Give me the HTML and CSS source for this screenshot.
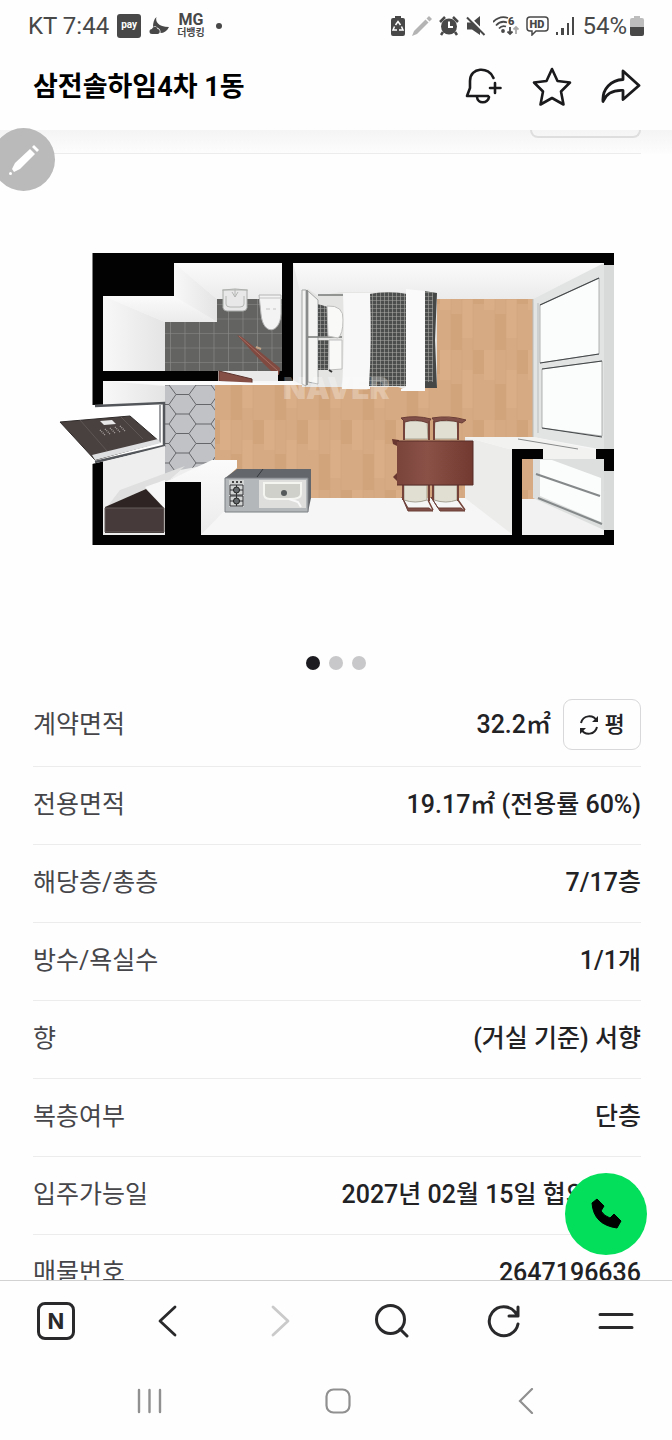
FILE: index.html
```html
<!DOCTYPE html>
<html lang="ko">
<head>
    <meta charset="UTF-8">
    <meta name="viewport" content="width=device-width, initial-scale=1.0">
    <title>삼전솔하임4차 1동</title>
    <link rel="stylesheet" href="styles.css">
</head>
<body>
    <!-- 상태 표시줄 -->
    <div class="status-bar">
        <div class="status-left">
            <span class="status-text">KT 7:44</span>
            <span class="pay">pay</span>
            <svg width="20" height="20" viewBox="0 0 20 20" fill="#484848"><path d="M7.500 1C6 5 9 11 20 11C18 15 15 17 11.500 17C12 14 10 12 8 11.500C7 10 5 10 4 11C4 7 5 3 7.500 1Z"/><path d="M3 18a2.500 2.500 0 0 1 0-5c1-3 5-3 5.500 0c3 0 3 5 0 5z"/></svg>
            <span class="mg"><b>MG</b><small>더뱅킹</small></span>
            <span class="more-dot"></span>
        </div>
        <div class="status-right">
            <svg width="14" height="20" viewBox="0 0 14 20"><path d="M4 2V0h6v2h2q2 0 2 2v14q0 2-2 2H2q-2 0-2-2V4q0-2 2-2z" fill="#484848"/><path d="M4.500 9L7 5.500L9.500 9M10.500 10.500L12 14H8M6 14H2L3.500 10.500" fill="none" stroke="#fff" stroke-width="1.500"/></svg>
            <svg width="20" height="20" viewBox="0 0 20 20" fill="#b4b4b4"><path d="M0 20L2 15L13.500 3.500L16.500 6.500L5 18Z"/><path d="M14.500 2.500L17 0L20 3L17.500 5.500Z"/></svg>
            <svg width="20" height="20" viewBox="0 0 20 20"><path d="M1 6L6 1M14 1L19 6M4 16L2 19M16 16L18 19" stroke="#484848" stroke-width="2.500"/><circle cx="10" cy="10.500" r="8" fill="#484848"/><path d="M10 5.500V11H14" fill="none" stroke="#fff" stroke-width="2"/></svg>
            <svg width="20" height="20" viewBox="0 0 20 20"><path d="M1 6.500H6L14 0V19L6 13.500H1Z" fill="#484848"/><path d="M2 0L20 18" stroke="#fff" stroke-width="2"/><path d="M1 1.500L18.500 19" stroke="#484848" stroke-width="2"/></svg>
            <svg width="26" height="20" viewBox="0 0 26 20" fill="none" stroke="#484848" stroke-width="1.800"><path d="M0 6Q7-1 15 2M3 9.500Q8 4 14 6.500M6 12.500Q9 9 13 10.500"/><circle cx="10" cy="15" r="1"/><path d="M17 11V18M14.500 15.500L17 18L19.500 15.500"/><path d="M23 18V11M20.500 13.500L23 11L25.500 13.500" stroke="#aaa"/><text class="icon-text" x="15" y="9">6</text></svg>
            <svg width="23" height="20" viewBox="0 0 23 20" fill="none" stroke="#484848"><path d="M4 1H19Q22 1 22 4V12Q22 15 19 15H10L6 19V15H4Q1 15 1 12V4Q1 1 4 1Z" stroke-width="1.500"/><text class="icon-text" x="3.500" y="12">HD</text></svg>
            <svg width="19" height="20" viewBox="0 0 19 20" fill="#484848"><path d="M0 16h2v3H0zM5 12h3v7H5zM11 7h2v12h-2zM16 1h2v18h-2z"/></svg>
            <span class="status-text">54%</span>
            <svg width="14" height="20" viewBox="0 0 14 20"><path d="M4 2V0h6v2h2q2 0 2 2v7H0V4q0-2 2-2z" fill="#bdbdbd"/><path d="M0 11H14V18q0 2-2 2H2q-2 0-2-2z" fill="#484848"/></svg>
        </div>
    </div>

    <header class="header">
        <h1>삼전솔하임4차 1동</h1>
        <div class="header-actions">
            <button type="button" class="icon-btn" aria-label="알림 추가">
                <svg width="40" height="40" viewBox="0 0 40 40" fill="none" stroke="#1a1a1c" stroke-width="2.600" stroke-linecap="round" stroke-linejoin="round"><path d="M30.500 11C26-1 7 0 7 14V21L4 29H25"/><path d="M14 30C14.500 37 25 37 26 30M27 21H37.500M32 16V26"/></svg>
            </button>
            <button type="button" class="icon-btn" aria-label="관심 매물">
                <svg width="40" height="40" viewBox="0 0 40 40" fill="none" stroke="#1a1a1c" stroke-width="2.600" stroke-linejoin="round"><path d="M20 2L25.500 14L38 15.500L29 24.500L31.500 37.500L20 31L8.500 37.500L11 24.500L2 15.500L14.500 14Z"/></svg>
            </button>
            <button type="button" class="icon-btn" aria-label="공유">
                <svg width="40" height="40" viewBox="0 0 40 40" fill="none" stroke="#1a1a1c" stroke-width="2.800" stroke-linejoin="round"><path d="M22 4L38 18.500L22 32.500V23.500C12 23 5 27 2 34.500C1 22 10 13 22 12.500Z"/></svg>
            </button>
        </div>
    </header>

    <main class="content">
        <div class="prev-row"><div class="prev-button"></div></div>

        <!-- 평면도 -->
        <section class="gallery">
            <svg class="floor-plan" viewBox="0 250 672 300" role="img" aria-label="평면도">
                <defs>
                    <pattern id="tile" width="14.500" height="14.500" patternUnits="userSpaceOnUse" x="170" y="304"><rect width="15" height="15" fill="#636462"/><path d="M0 0H14.500M0 0V14.500" stroke="#8d8e8c" stroke-width="1.200"/></pattern>
                    <pattern id="wood" width="44" height="70" patternUnits="userSpaceOnUse"><rect width="44" height="70" fill="#d6aa82"/><path d="M0 0H11V30H0ZM22 20H33V58H22Z" fill="#daaf88"/><path d="M11 34H22V70H11ZM33 0H44V24H33Z" fill="#d2a47b"/><path d="M11 0V70M22 0V70M33 0V70" stroke="#cfa27a" stroke-width=".5"/></pattern>
                    <pattern id="hex" width="42" height="39" patternUnits="userSpaceOnUse" x="169" y="385"><rect width="42" height="39" fill="#c1c2c5"/><path d="M0 0L7 9.500L0 19.500H-8M7 9.500H20L27 0H42M20 9.500L27 19.500H42M0 19.500L7 29L0 39M7 29H20L27 19.500M20 29L27 39H42" fill="none" stroke="#64666a" stroke-width="1"/></pattern>
                    <pattern id="check" width="4" height="4" patternUnits="userSpaceOnUse"><rect width="4" height="4" fill="#4c4e4d"/><path d="M0 0H4M0 0V4" stroke="#a9aaa6" stroke-width="1.200"/></pattern>
                    <linearGradient id="wallDown" x1="0" y1="0" x2="0" y2="1"><stop offset="0" stop-color="#fafbfa"/><stop offset="1" stop-color="#eaebea"/></linearGradient>
                    <linearGradient id="wallRight"><stop offset="0" stop-color="#f8f8f8"/><stop offset="1" stop-color="#e3e4e3"/></linearGradient>
                    <linearGradient id="table"><stop offset="0" stop-color="#7a443b"/><stop offset=".4" stop-color="#8a5147"/><stop offset="1" stop-color="#71392f"/></linearGradient>
                </defs>

                <!-- 외벽 -->
                <rect x="92.500" y="253" width="521.500" height="292" fill="#020202"/>
                <path d="M293 263H604V535H103V381H293Z" fill="#f7f7f7"/>

                <!-- 욕실 -->
                <path d="M103 296H174V263H282V371H103Z" fill="#f5f6f5"/>
                <path d="M103 296L165 322V371H103Z" fill="url(#wallRight)"/>
                <path d="M103 296H174L217 322H165Z" fill="url(#wallDown)"/>
                <path d="M174 263L217 299V322L174 296Z" fill="url(#wallRight)"/>
                <path d="M174 263H282V299H217Z" fill="url(#wallDown)"/>
                <path d="M165 322H217V299H282V371H165Z" fill="url(#tile)"/>
                <path d="M223 290Q235 288 247 290V308Q246 311 243 311H227Q224 311 223 308Z" fill="#e7e8e7" stroke="#a8aaa8"/>
                <path d="M226 296V304Q226 307 230 307H240Q244 307 244 304V296M222 290H248M235 289V297M232 292L235 297L238 292" fill="none" stroke="#b4b6b4"/>
                <path d="M259 295H281V314C280 334 263 336 261 314Z" fill="#f2f3f2" stroke="#b4b5b4"/>
                <path d="M260 298H281M266 309H270M273 309H276" stroke="#c2c3c2"/>
                <path d="M237 335L242 337L280 368L279 375L274 374L260 360Z" fill="#804a41"/>
                <path d="M239 336L278 371" stroke="#a56c61"/>
                <path d="M256 347L261 349" stroke="#c1a388" stroke-width="2"/>
                <rect x="218" y="371" width="60" height="10" fill="#e9e9e9"/>
                <path d="M219 371L252 379V386L219 381Z" fill="#864f46" stroke="#5b332d"/>

                <!-- 거실 -->
                <path d="M293 263H604L533 299H302Z" fill="url(#wallDown)"/>
                <path d="M293 263L302 299V385L293 380Z" fill="#e9eae9"/>
                <path d="M302 299H533V437H465V498H215V385H302Z" fill="url(#wood)"/>
                <path d="M103 381L219 381L300 385H165Z" fill="#fbfbfb"/>
                <path d="M103 381L165 386V404L103 405Z" fill="url(#wallRight)"/>
                <rect x="165" y="385" width="50" height="98" fill="url(#hex)"/>

                <!-- 침대 -->
                <path d="M302 290L308 289L318 296L341 292L437 293V387L410 388V391L398 387H302Z" fill="#e4e4e3"/>
                <path d="M302 290L306 290V386L302 384ZM308 291L318 300V384L308 382Z" fill="#f4f4f3" stroke="#a5a7a6"/>
                <path d="M307 290V385M308 337H342M318 295H343" stroke="#777978" stroke-width="1.500"/>
                <path d="M318 304L328 307L329 336L318 337ZM318 340H329L328 370L318 370Z" fill="url(#check)"/>
                <path d="M327 306Q344 305 343 320Q343 334 338 338L328 336ZM329 340H342V369L329 370Z" fill="#f9f9f8" stroke="#bebfbd"/>
                <path d="M329 370L332 372" stroke="#333" stroke-width="2"/>
                <path d="M343 293H370V389H342Q345 340 343 293Z" fill="#f8f8f8"/>
                <path d="M370 294Q388 290 407 294V386H369Q372 340 370 294Z" fill="url(#check)"/>
                <path d="M424 291L437 293L435 340L437 388H424Z" fill="#454746"/>
                <path d="M424 292H433V382H424Z" fill="url(#check)"/>
                <path d="M406 289L425 291V391H401V389L406 387Z" fill="#fafafa"/>
                <text class="watermark" x="283" y="399">NAVER</text>

                <!-- 창문 -->
                <path d="M533 299L604 263V450L533 437Z" fill="#e2e4e4"/>
                <path d="M540 305L599 278V354L540 363Z" fill="#fbfcfc" stroke="#949697" stroke-width=".7"/>
                <path d="M542 369L602 361V436L542 428Z" fill="#fbfcfc" stroke="#949697" stroke-width=".7"/>
                <path d="M540 305L599 278M540 363L599 354M542 369L602 361M542 428L602 437" stroke="#444748" stroke-width="1.200"/>
                <path d="M533 299V437M538 303V433" stroke="#b9bcbc"/>
                <rect x="604" y="265" width="10" height="265" fill="#d8dad9"/>

                <!-- 현관 -->
                <path d="M92 405L165 403V447L92 464Z" fill="#fff"/>
                <path d="M95 406L164 403V446L95 462" fill="none" stroke="#53565a" stroke-width="2.500"/>
                <path d="M160 405V443" stroke="#9b9da0" stroke-width="2"/>
                <path d="M60 422L130 416L160 442L95 460Z" fill="#494140" stroke="#302b2b"/>
                <path d="M92 455L158 439L161 443L95 460Z" fill="#dedfe0"/>
                <path d="M80 420L107 451M121 417L143 439" stroke="#5e5655"/>
                <path d="M100 421L112 420L116 424L104 425Z" fill="#e8e8e8"/>
                <path d="M100 430L105 435M105 429L110 434M110 428L115 433M115 427L120 432M120 426L125 431" stroke="#aaa4a1" stroke-width="1.300" stroke-dasharray="1 1"/>
                <path d="M103 462L165 446V482L180 470L202 466L165 482V535H103Z" fill="#edeeed"/>
                <path d="M107 507L120 490L185 466L165 484L145 489Z" fill="#dedfde"/>
                <path d="M105 507L146 489L164 508V533H105Z" fill="#2d2423"/>
                <path d="M105 508H164V532H105Z" fill="#463b3a" stroke="#655c5b"/>
                <path d="M145 487L165 480V508Z" fill="#f7f7f7"/>

                <!-- 주방 -->
                <path d="M165 482L212 460H237V468L225 479V512L201 535V482Z" fill="url(#wallDown)"/>
                <rect x="165" y="482" width="36" height="54" fill="#020202"/>
                <path d="M201 535L225 510L310 498H465L513 535Z" fill="#f5f6f5"/>
                <path d="M225 478L237 469H311V498L308 512H225Z" fill="#63666a"/>
                <path d="M263 469L257 477" stroke="#34373a"/>
                <path d="M225 478H308V512H225Z" fill="#b4b7ba" stroke="#7c8084"/>
                <path d="M229 480H244V507H229Z" fill="#d2d3d3"/>
                <path d="M230 485H243V495H230ZM230 496H243V506H230ZM236.500 485V506M230 490H243M230 501H243" fill="none" stroke="#313334"/>
                <circle cx="236.500" cy="490" r="3" fill="#66696b" stroke="#222"/><circle cx="236.500" cy="501" r="3" fill="#66696b" stroke="#222"/>
                <path d="M232 482H242" stroke="#444" stroke-width="2" stroke-dasharray="2 2"/>
                <rect x="259" y="480" width="47" height="28" fill="#dedfdd"/>
                <path d="M264 483H301V494Q301 499 290 499H270Q263 499 264 492Z" fill="#cfd0ca" stroke="#f4f4f1" stroke-width="2"/>
                <circle cx="284" cy="493" r="3" fill="#55595a"/><path d="M289 499L298 502L301 507" fill="none" stroke="#f8f8f8" stroke-width="2"/>

                <!-- 식탁 -->
                <g fill="#e1dfd2" stroke="#a5a092">
                    <path d="M405 421H427L428 439H404ZM435 421H457L458 439H434ZM404 485H427V500Q415 504 404 500ZM434 485H457V500Q446 504 434 500Z"/>
                </g>
                <path d="M401 418Q416 415 431 419L428 423Q415 418 405 422ZM432 418Q449 415 466 420L462 423Q445 418 435 422ZM402 497L408 508H429L433 511H408ZM431 497L438 508H461L465 511H440Z" fill="#805048" stroke="#6a3e37"/>
                <path d="M404 421V440M429 421V440M434 421V440M458 421V440M403 485V500M429 485V501M433 485V500M458 485V501" stroke="#754339" stroke-width="2"/>
                <path d="M428 500L433 510M458 500L465 510" stroke="#754339" stroke-width="1.500"/>
                <path d="M465 437L513 450V535L465 498Z" fill="#ececeb"/>
                <path d="M465 437H533L596 450V459H513V450Z" fill="#f2f2f1"/>
                <path d="M392 439L399 440V483L393 477L397 473V446L393 444Z" fill="#69372f"/>
                <rect x="397" y="441" width="76" height="44" fill="url(#table)"/>
                <path d="M397 441H473V485H397" fill="none" stroke="#572d28"/>

                <!-- 발코니 -->
                <rect x="522" y="459" width="82" height="76" fill="#f1f2f1"/>
                <path d="M522 459H536V499H522Z" fill="url(#wood)"/>
                <path d="M533 459H604V530L533 498Z" fill="#dcdfde"/>
                <path d="M540 460H552L601 478V522L540 496Z" fill="#fbfcfc"/>
                <path d="M536 474L600 496M538 498L602 524" stroke="#85898a" stroke-width="2"/>
                <path d="M518 439L578 449" stroke="#888a89"/>
                <path d="M512 449H543V459H522V536H512ZM596 449H614V471H604V459H596ZM604 530H614V545H604Z" fill="#020202"/>
            </svg>
            <div class="dots">
                <span class="dot active"></span>
                <span class="dot"></span>
                <span class="dot"></span>
            </div>
        </section>

        <!-- 매물 정보 -->
        <table class="info">
            <tr class="first">
                <th scope="row">계약면적</th>
                <td>
                    <div class="area">
                        <span>32.2㎡</span>
                        <button type="button" class="unit-btn">
                            <svg width="20" height="20" viewBox="0 0 20 20" fill="none" stroke="#222225" stroke-width="2"><path d="M2 8C4 0 14-1 18 6M18 12C16 20 6 21 2 14"/><path d="M19 1V7H13ZM1 19V13H7Z" fill="#222225" stroke="none"/></svg>
                            평
                        </button>
                    </div>
                </td>
            </tr>
            <tr><th scope="row">전용면적</th><td>19.17㎡ (전용률 60%)</td></tr>
            <tr><th scope="row">해당층/총층</th><td>7/17층</td></tr>
            <tr><th scope="row">방수/욕실수</th><td>1/1개</td></tr>
            <tr><th scope="row">향</th><td>(거실 기준) 서향</td></tr>
            <tr><th scope="row">복층여부</th><td>단층</td></tr>
            <tr><th scope="row">입주가능일</th><td>2027년 02월 15일 협의 가능</td></tr>
            <tr><th scope="row">매물번호</th><td>2647196636</td></tr>
        </table>
    </main>

    <footer class="footer">
        <button type="button" class="call-btn" aria-label="전화">
            <svg width="32" height="32" viewBox="0 0 32 32"><path d="M2 5L7 1L14 8L11 13Q14 18 20 20L24 16L31 23L27 30C12 28 3 20 2 5Z" stroke="#000" stroke-linejoin="round"/></svg>
        </button>
        <nav class="browser-nav">
            <a href="#" class="home-link" aria-label="네이버 홈">N</a>
            <button type="button" class="icon-btn" aria-label="뒤로"><svg width="20" height="32" viewBox="0 0 20 32" fill="none" stroke="#29292b" stroke-width="2.800" stroke-linecap="round" stroke-linejoin="round"><path d="M17 2L2 16L17 30"/></svg></button>
            <button type="button" class="icon-btn" aria-label="앞으로"><svg width="20" height="32" viewBox="0 0 20 32" fill="none" stroke="#cacaca" stroke-width="2.800" stroke-linecap="round" stroke-linejoin="round"><path d="M3 2L18 16L3 30"/></svg></button>
            <button type="button" class="icon-btn" aria-label="검색"><svg width="34" height="34" viewBox="0 0 34 34" fill="none" stroke="#29292b" stroke-width="3" stroke-linecap="round"><circle cx="15.500" cy="15.500" r="14"/><path d="M25 25L32 32"/></svg></button>
            <button type="button" class="icon-btn" aria-label="새로고침"><svg width="34" height="34" viewBox="0 0 34 34" fill="none" stroke="#29292b" stroke-width="3" stroke-linecap="round" stroke-linejoin="round"><path d="M31 20A14.500 14.500 0 1 1 28 8L31 12M31 3V12H22"/></svg></button>
            <button type="button" class="icon-btn" aria-label="메뉴"><svg width="36" height="20" viewBox="0 0 36 20" stroke="#29292b" stroke-width="3" stroke-linecap="round"><path d="M2 3.500H34M2 16.500H34"/></svg></button>
        </nav>
        <div class="system-nav">
            <button type="button" class="icon-btn" aria-label="최근 앱"><svg width="26" height="26" viewBox="0 0 26 26" stroke="#909090" stroke-width="2.400" stroke-linecap="round"><path d="M2 2V24M12.500 2V24M23 2V24"/></svg></button>
            <button type="button" class="icon-btn" aria-label="홈"><svg width="26" height="26" viewBox="0 0 26 26" fill="none" stroke="#909090" stroke-width="2.200"><rect x="1.500" y="1.500" width="23" height="23" rx="7"/></svg></button>
            <button type="button" class="icon-btn" aria-label="뒤로 가기"><svg width="16" height="26" viewBox="0 0 16 26" fill="none" stroke="#909090" stroke-width="2.200" stroke-linecap="round"><path d="M14 1L2 13L14 25"/></svg></button>
        </div>
    </footer>

    <button type="button" class="edit-btn" aria-label="메모">
        <svg width="32" height="32" viewBox="0 0 32 32" fill="#fff"><path d="M4 25L7 19L22 5L27 10L12 25L6 28Z"/><path d="M24 3L26 1L31 6L29 8Z"/><circle cx="2.500" cy="29.500" r="1.500"/></svg>
    </button>
</body>
</html>
```
FILE: styles.css
```css
* {
    box-sizing: border-box;
}

body {
    display: flex;
    flex-direction: column;
    position: relative;
    height: 100vh;
    margin: 0;
    overflow: hidden;
    background-color: #fefefe;
    color: #222225;
    font-family: Roboto, "Noto Sans CJK KR", sans-serif;
}

svg {
    display: block;
    flex-shrink: 0;
}

button {
    padding: 0;
    border: none;
    background: none;
    color: inherit;
    font: inherit;
    cursor: pointer;
}

/* 상태 표시줄 */
.status-bar {
    display: flex;
    justify-content: space-between;
    align-items: center;
    height: 51px;
    flex-shrink: 0;
    padding: 0 28px;
    color: #484848;
}

.status-left,
.status-right {
    display: flex;
    align-items: center;
    gap: 8px;
}

.status-text {
    font-size: 24px;
    line-height: 28px;
}

.status-right {
    gap: 7px;
}

.status-right .status-text {
    margin-right: -4px;
}

.icon-text {
    fill: #484848;
    stroke: none;
    font-size: 11px;
    font-weight: 900;
}

.pay {
    width: 24px;
    height: 24px;
    border-radius: 3px;
    background-color: #484848;
    color: white;
    font-size: 10px;
    font-weight: bold;
    line-height: 21px;
    text-align: center;
}

.mg {
    display: flex;
    flex-direction: column;
    align-items: center;
    font-size: 16px;
    line-height: 14px;
}

.mg small {
    font-size: 10px;
    font-weight: bold;
    line-height: 12px;
}

.more-dot {
    width: 6px;
    height: 6px;
    margin-left: 3px;
    border-radius: 50%;
    background-color: #484848;
}

/* 헤더 */
.header {
    display: flex;
    justify-content: space-between;
    align-items: center;
    height: 79px;
    flex-shrink: 0;
    padding: 0 31px 8px 33px;
}

.header h1 {
    margin: 0;
    color: #000;
    font-size: 27px;
    line-height: 40px;
}

.header-actions {
    display: flex;
    gap: 29px;
}

/* 본문 */
.content {
    flex: 1;
    min-height: 0;
    overflow-y: auto;
    scrollbar-width: none;
}

.prev-row {
    height: 24px;
    padding: 0 31px 0 33px;
    background: linear-gradient(#f4f4f4, #fdfdfd);
}

.prev-row::after {
    content: "";
    display: block;
    height: 1px;
    margin-top: 15px;
    background-color: #ececec;
}

.prev-button {
    width: 111px;
    height: 8px;
    margin-left: auto;
    border: 2px solid #dedede;
    border-top: none;
    border-radius: 0 0 9px 9px;
}

.gallery {
    padding: 96px 0 14px;
}

.floor-plan {
    width: 100%;
    margin-bottom: 106px;
}

.watermark {
    fill: white;
    fill-opacity: 0.3;
    font-family: Inter, sans-serif;
    font-size: 30px;
    font-weight: 900;
}

.dots {
    display: flex;
    justify-content: center;
    gap: 9px;
}

.dot {
    width: 14px;
    height: 14px;
    border-radius: 50%;
    background-color: #c8c8ca;
}

.dot.active {
    background-color: #1c1c20;
}

.info {
    width: calc(100% - 64px);
    margin: 0 31px 0 33px;
    border-collapse: collapse;
    font-size: 25px;
    line-height: 36px;
}

.info tr {
    height: 78px;
    border-bottom: 1px solid #ececec;
}

.info .first {
    height: 82px;
}

.info th {
    padding: 0;
    color: #46464a;
    font-weight: normal;
    text-align: left;
}

.info td {
    padding: 0;
    font-weight: 500;
    text-align: right;
    white-space: nowrap;
}

.area {
    display: flex;
    justify-content: flex-end;
    align-items: center;
    gap: 12px;
}

.unit-btn {
    display: flex;
    justify-content: center;
    align-items: center;
    gap: 5px;
    width: 78px;
    height: 51px;
    border: 1px solid #d8d8da;
    border-radius: 9px;
    font-size: 22px;
}

/* 하단 메뉴 */
.footer {
    position: relative;
    flex-shrink: 0;
    border-top: 1px solid #d2d2d2;
}

.browser-nav {
    display: grid;
    grid-template-columns: repeat(6, 1fr);
    place-items: center;
    height: 80px;
}

.home-link {
    width: 38px;
    height: 38px;
    border: 3px solid #29292b;
    border-radius: 8px;
    color: #29292b;
    font-family: Inter, sans-serif;
    font-size: 22px;
    font-weight: bold;
    line-height: 32px;
    text-align: center;
    text-decoration: none;
}

.system-nav {
    display: grid;
    grid-template-columns: repeat(3, 1fr);
    place-items: center;
    height: 79px;
    padding: 0 52px 0 56px;
}

/* 떠 있는 버튼 */
.call-btn {
    position: absolute;
    right: 25px;
    bottom: calc(100% + 26px);
    display: grid;
    place-items: center;
    width: 82px;
    height: 82px;
    border-radius: 50%;
    background-color: #03df5b;
}

.edit-btn {
    position: absolute;
    top: 128px;
    left: -8px;
    display: grid;
    place-items: center;
    width: 63px;
    height: 63px;
    border-radius: 50%;
    background-color: #bababa;
}
```
